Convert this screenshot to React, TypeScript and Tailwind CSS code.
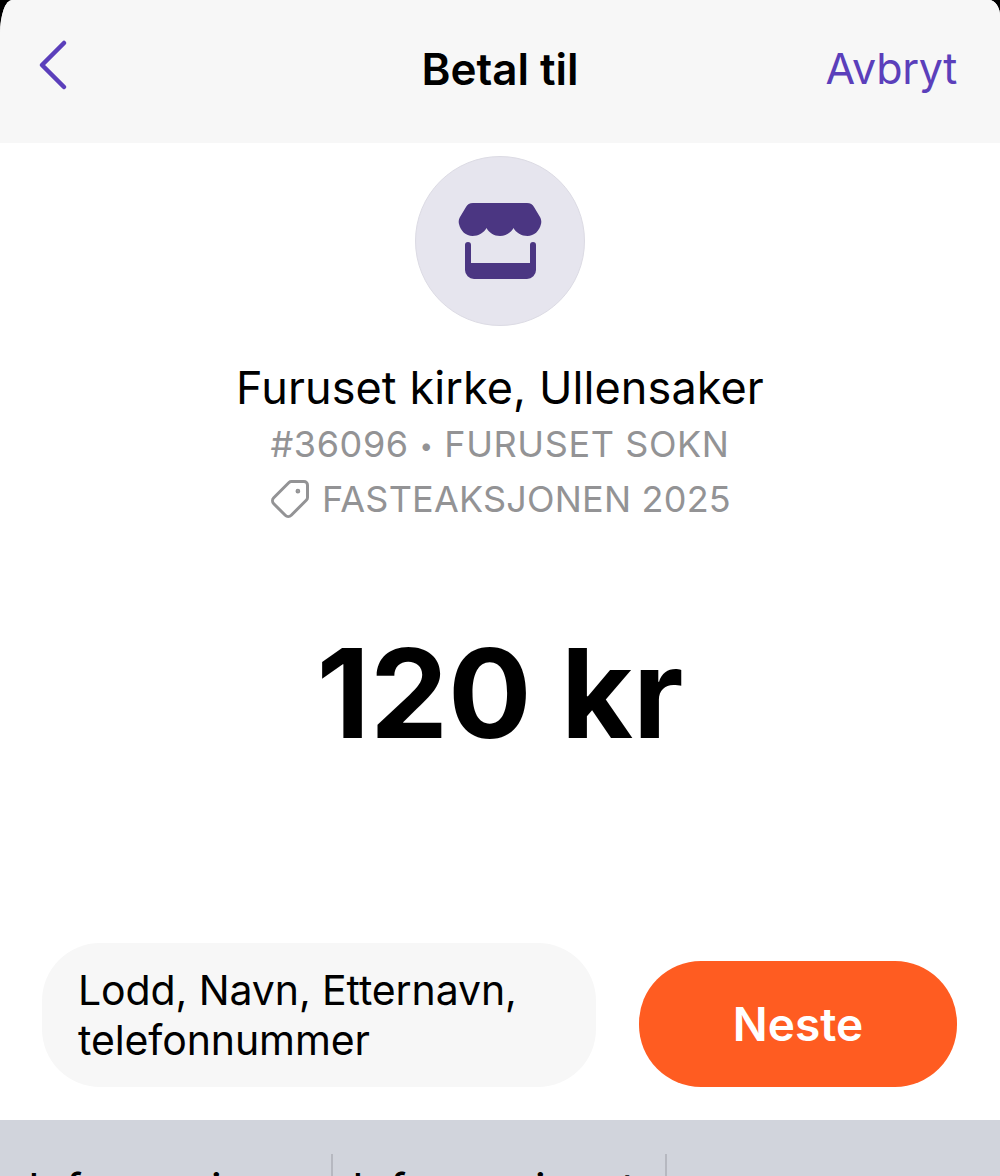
import { ChevronLeft, Tag } from 'lucide-react';

function ShopIcon() {
  return (
    <svg viewBox="450 195 100 94" className="w-[100px] h-[94px] mt-[2px]" fill="#4b3682">
      <path d="M473 203 H527 C530.5 203 532.5 204.5 534 207 L540 217 C541.5 220 541.5 222 541 224 C539.5 231 534 236 527.5 236 C521.5 236 516 232.500 513.500 228 C511 232.500 506 236 500 236 C494 236 489 232.500 486.500 228 C484 232.500 478.500 236 472.500 236 C466 236 460.500 231 459 224 C458.500 222 458.500 220 460 217 L466 207 C467.500 204.500 469.500 203 473 203 Z" />
      <path d="M465 245 A3 3 0 0 1 471 245 V263 H530 V245 A3 3 0 0 1 536 245 V270 A9 9 0 0 1 527 279 H474 A9 9 0 0 1 465 270 Z" />
    </svg>
  );
}

export default function App() {
  return (
    <div className="w-[1000px] h-[1176px] overflow-hidden bg-black font-['Inter',sans-serif]">
      <div className="h-full rounded-tl-[12px_34px] rounded-tr-[11px_16px] overflow-hidden bg-white flex flex-col">
        {/* Header */}
        <header className="h-[143px] shrink-0 bg-[#f7f7f7] grid grid-cols-[1fr_auto_1fr] items-center px-[43px] pb-[6px]">
          <ChevronLeft className="w-[88px] h-[88px] -ml-[34px] -mt-[7px] text-[#5b3fbb]" strokeWidth={1.25} />
          <h1 className="text-[44px] leading-none font-semibold text-black">Betal til</h1>
          <button className="justify-self-end text-[43px] leading-none text-[#5b3fbb] tracking-[-0.3px]">Avbryt</button>
        </header>

        {/* Recipient */}
        <section className="flex flex-col items-center pt-[13px]">
          <div className="w-[170px] h-[170px] rounded-full bg-[#e6e5ee] border border-[#dcdbe4] flex items-center justify-center">
            <ShopIcon />
          </div>
          <p className="mt-[35px] text-[45px] leading-[54px] text-black tracking-[0.1px]">Furuset kirke, Ullensaker</p>
          <p className="mt-[4px] text-[36px] leading-[50px] text-[#939395] tracking-[0.6px]">
            #36096 <span className="text-[24px] align-[3px]">•</span> FURUSET SOKN
          </p>
          <div className="mt-[1px] flex items-center gap-[11px] text-[36px] leading-[54px] text-[#939395] tracking-[0.2px]">
            <Tag className="w-[42px] h-[42px] rotate-90" strokeWidth={1.7} />
            <span>FASTEAKSJONEN 2025</span>
          </div>
        </section>

        {/* Amount */}
        <p className="mt-[97px] text-center text-[124px] leading-[140px] font-bold text-black">120 kr</p>

        {/* Message + next */}
        <div className="mt-auto flex items-end justify-between px-[42px] pb-[33px]">
          <div className="w-[554px] h-[144px] rounded-[58px] bg-[#f7f7f7] flex items-center pl-[36px] text-[41px] leading-[50px] text-black tracking-[-0.1px]">
            <span>
              Lodd, Navn, Etternavn,
              <br />
              telefonnummer
            </span>
          </div>
          <button className="w-[318px] h-[126px] mr-[1px] rounded-[62px] bg-[#ff5c21] text-white text-[46px] font-semibold">Neste</button>
        </div>

        {/* Keyboard suggestions */}
        <div className="h-[56px] shrink-0 bg-[#d1d4dc] overflow-hidden flex items-start pt-[34px] text-[44px] leading-none text-black">
          <span className="w-[331px] pl-[28px] shrink-0 pt-[13px]">Informasjon</span>
          <span className="w-[334px] pl-[19px] shrink-0 border-l-2 border-[#b6b8c0] h-[60px] pt-[13px]">Informasjonst</span>
          <span className="flex-1 border-l-2 border-[#b6b8c0] h-[60px]" />
        </div>
      </div>
    </div>
  );
}
